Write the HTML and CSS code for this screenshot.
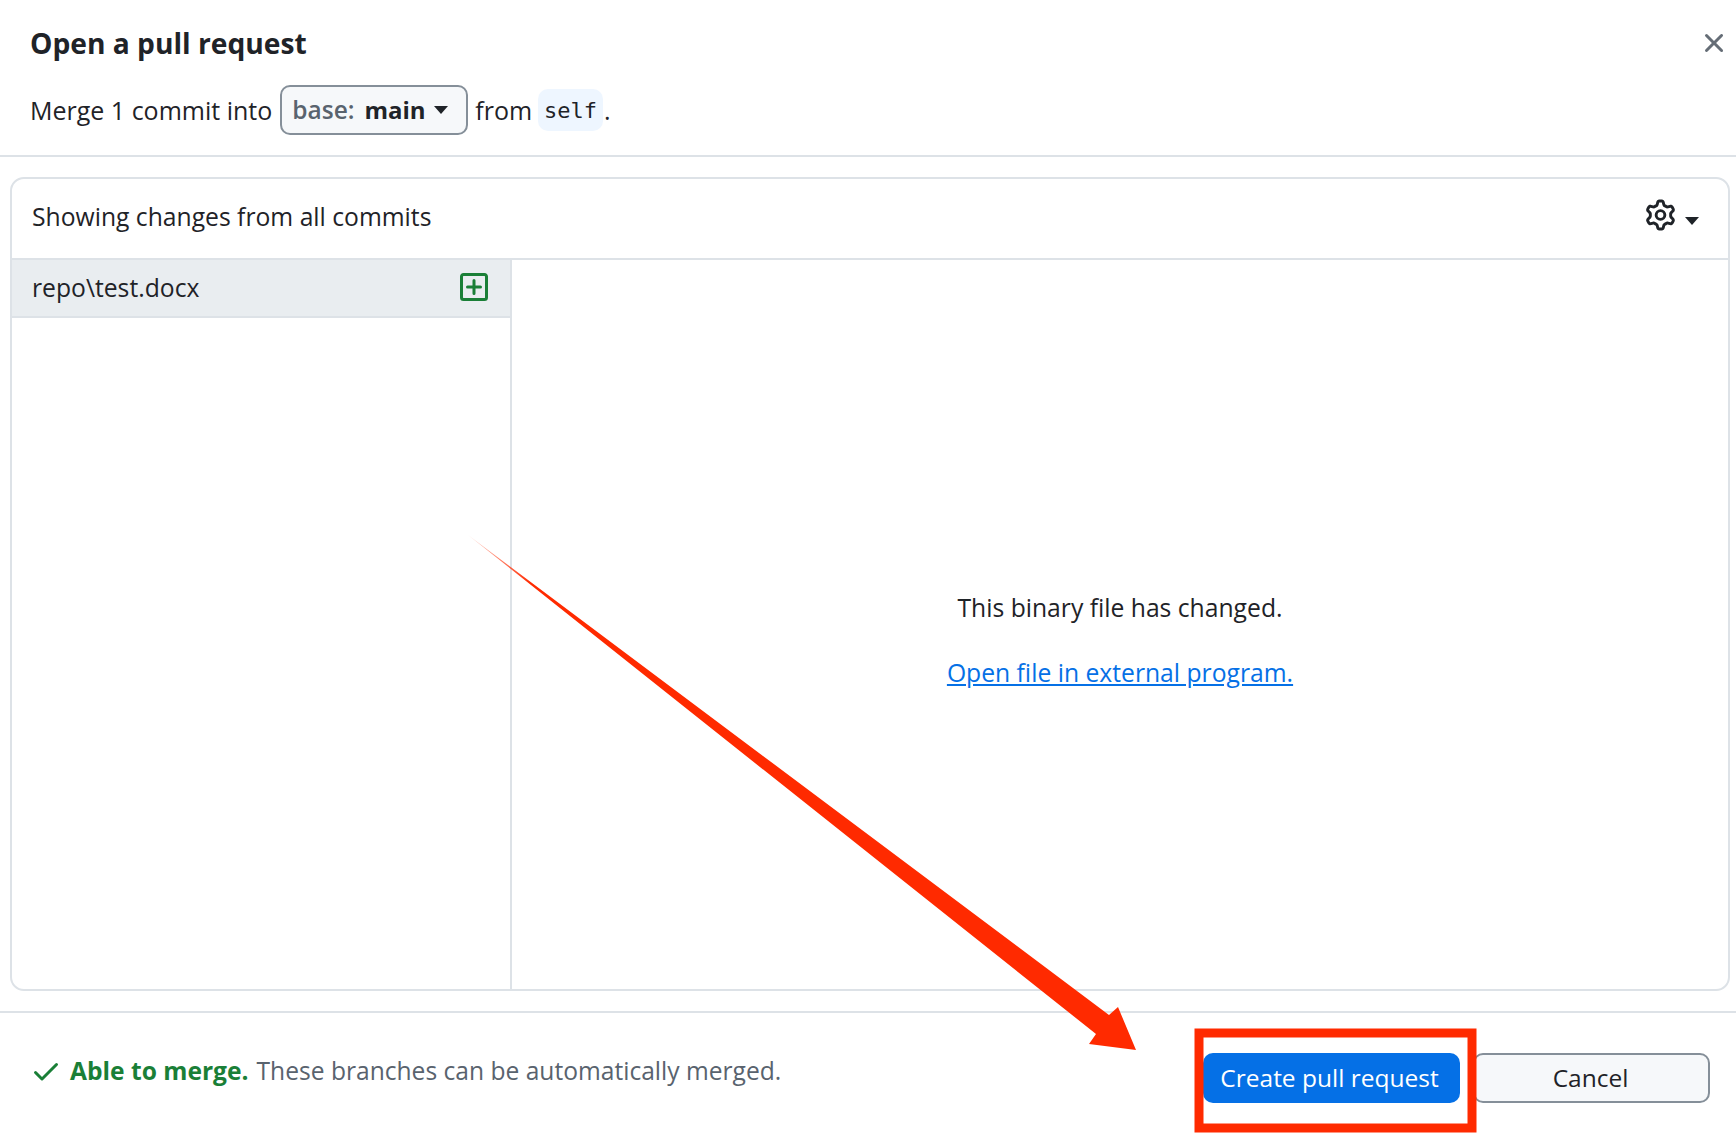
FILE: index.html
```html
<!DOCTYPE html>
<html lang="en">
<head>
<meta charset="utf-8">
<title>Open a pull request</title>
<link rel="stylesheet" href="styles.css">
</head>
<body>
<div class="dialog">
  <header class="header">
    <div class="title-row">
      <h1 class="title">Open a pull request</h1>
      <svg class="close" viewBox="0 0 16 16"><path d="M3.72 3.72a.75.75 0 0 1 1.06 0L8 6.94l3.22-3.22a.749.749 0 0 1 1.275.326.749.749 0 0 1-.215.734L9.06 8l3.22 3.22a.749.749 0 0 1-.326 1.275.749.749 0 0 1-.734-.215L8 9.06l-3.22 3.22a.751.751 0 0 1-1.042-.018.751.751 0 0 1-.018-1.042L6.94 8 3.72 4.78a.75.75 0 0 1 0-1.06Z"/></svg>
    </div>
    <div class="merge-row">
      <span>Merge 1 commit into</span>
      <button class="base-btn"><span class="base-label">base:</span><span class="base-name">main</span><span class="caret"></span></button>
      <span>from</span>
      <code class="branch">self</code><span class="dot">.</span>
    </div>
  </header>
  <section class="card">
    <div class="card-head">
      <span>Showing changes from all commits</span>
      <div class="settings">
        <svg class="gear" viewBox="0 0 16 16"><path d="M8 0a8.2 8.2 0 0 1 .701.031C9.444.095 9.99.645 10.16 1.29l.288 1.107c.018.066.079.158.212.224.231.114.454.243.668.386.123.082.233.09.299.071l1.103-.303c.644-.176 1.392.021 1.82.63.27.385.506.792.704 1.218.315.675.111 1.422-.364 1.891l-.814.806c-.049.048-.098.147-.088.294.016.257.016.515 0 .772-.01.147.038.246.088.294l.814.806c.475.469.679 1.216.364 1.891a7.977 7.977 0 0 1-.704 1.217c-.428.61-1.176.807-1.82.63l-1.102-.302c-.067-.019-.177-.011-.3.071a5.909 5.909 0 0 1-.668.386c-.133.066-.194.158-.211.224l-.29 1.106c-.168.646-.715 1.196-1.458 1.26a8.006 8.006 0 0 1-1.402 0c-.743-.064-1.289-.614-1.458-1.26l-.289-1.106c-.018-.066-.079-.158-.212-.224a5.738 5.738 0 0 1-.668-.386c-.123-.082-.233-.09-.299-.071l-1.103.303c-.644.176-1.392-.021-1.82-.63a8.12 8.12 0 0 1-.704-1.218c-.315-.675-.111-1.422.363-1.891l.815-.806c.05-.048.098-.147.088-.294a6.214 6.214 0 0 1 0-.772c.01-.147-.038-.246-.088-.294l-.815-.806C.635 6.045.431 5.298.746 4.623a7.92 7.92 0 0 1 .704-1.217c.428-.61 1.176-.807 1.82-.63l1.102.302c.067.019.177.011.3-.071.214-.143.437-.272.668-.386.133-.066.194-.158.211-.224l.29-1.106C6.009.645 6.556.095 7.299.03 7.53.01 7.764 0 8 0Zm-.571 1.525c-.036.003-.108.036-.137.146l-.289 1.105c-.147.561-.549.967-.998 1.189-.173.086-.34.183-.5.29-.417.278-.97.423-1.529.27l-1.103-.303c-.109-.03-.175.016-.195.045-.22.312-.412.644-.573.99-.014.031-.021.11.059.19l.815.806c.411.406.562.957.53 1.456a4.709 4.709 0 0 0 0 .582c.032.499-.119 1.05-.53 1.456l-.815.806c-.081.08-.073.159-.059.19.162.346.353.677.573.989.02.03.085.076.195.046l1.102-.303c.56-.153 1.113-.008 1.53.27.161.107.328.204.501.29.447.222.85.629.997 1.189l.289 1.105c.029.109.101.143.137.146a6.6 6.6 0 0 0 1.142 0c.036-.003.108-.036.137-.146l.289-1.105c.147-.561.549-.967.998-1.189.173-.086.34-.183.5-.29.417-.278.97-.423 1.529-.27l1.103.303c.109.029.175-.016.195-.045.22-.313.411-.644.573-.99.014-.031.021-.11-.059-.19l-.815-.806c-.411-.406-.562-.957-.53-1.456a4.709 4.709 0 0 0 0-.582c-.032-.499.119-1.05.53-1.456l.815-.806c.081-.08.073-.159.059-.19a6.464 6.464 0 0 0-.573-.989c-.02-.03-.085-.076-.195-.046l-1.102.303c-.56.153-1.113.008-1.53-.27a4.44 4.44 0 0 0-.501-.29c-.447-.222-.85-.629-.997-1.189l-.289-1.105c-.029-.11-.101-.143-.137-.146a6.6 6.6 0 0 0-1.142 0ZM11 8a3 3 0 1 1-6 0 3 3 0 0 1 6 0ZM9.5 8a1.5 1.5 0 1 0-3.001.001A1.5 1.5 0 0 0 9.5 8Z"/></svg>
        <span class="caret caret-dark"></span>
      </div>
    </div>
    <div class="card-body">
      <aside class="sidebar">
        <div class="file-row">
          <span>repo\test.docx</span>
          <svg class="added" viewBox="0 0 16 16"><path d="M2.75 1h10.5c.966 0 1.75.784 1.75 1.75v10.5A1.75 1.75 0 0 1 13.25 15H2.75A1.75 1.75 0 0 1 1 13.25V2.75C1 1.784 1.784 1 2.75 1Zm10.5 1.5H2.75a.25.25 0 0 0-.25.25v10.5c0 .138.112.25.25.25h10.5a.25.25 0 0 0 .25-.25V2.75a.25.25 0 0 0-.25-.25ZM8 4a.75.75 0 0 1 .75.75v2.5h2.5a.75.75 0 0 1 0 1.5h-2.5v2.5a.75.75 0 0 1-1.5 0v-2.5h-2.5a.75.75 0 0 1 0-1.5h2.5v-2.5A.75.75 0 0 1 8 4Z"/></svg>
        </div>
      </aside>
      <main class="diff">
        <p class="binary">This binary file has changed.</p>
        <a class="external" href="#">Open file in external program.</a>
      </main>
    </div>
  </section>
  <footer class="footer">
    <div class="status">
      <svg class="check" viewBox="0 0 16 16"><path d="M13.78 4.22a.75.75 0 0 1 0 1.06l-7.25 7.25a.75.75 0 0 1-1.06 0L2.22 9.28a.751.751 0 0 1 .018-1.042.751.751 0 0 1 1.042-.018L6 10.94l6.72-6.72a.75.75 0 0 1 1.06 0Z"/></svg>
      <strong class="able">Able to merge.</strong>
      <span class="muted">These branches can be automatically merged.</span>
    </div>
    <div class="actions">
      <button class="btn btn-primary">Create pull request</button>
      <button class="btn btn-cancel">Cancel</button>
    </div>
  </footer>
  <svg class="annotation" viewBox="0 0 1736 1139" aria-hidden="true">
    <defs>
      <linearGradient id="fade" gradientUnits="userSpaceOnUse" x1="468" y1="535" x2="530" y2="585">
        <stop offset="0" stop-color="#ff2a00" stop-opacity="0.2"/>
        <stop offset="1" stop-color="#ff2a00"/>
      </linearGradient>
    </defs>
    <polygon fill="url(#fade)" points="468,535 1109,1015 1118,1007 1136,1050 1089,1044 1096,1034"/>
    <rect class="frame" x="1199" y="1033" width="273" height="95"/>
  </svg>
</div>
</body>
</html>
```

FILE: styles.css
```css
* { box-sizing: border-box; }
html, body { margin: 0; padding: 0; background: #fff; }
body {
  font-family: "Open Sans", "Noto Sans", sans-serif;
  font-size: 24.7px;
  color: #1f2328;
}
.dialog {
  position: relative;
  width: 1736px;
  height: 1139px;
  display: flex;
  flex-direction: column;
  overflow: hidden;
}
.header {
  height: 157px;
  border-bottom: 2px solid #dde2e7;
  padding: 23px 6px 0 30px;
  flex: none;
}
.title-row {
  display: flex;
  justify-content: space-between;
  align-items: center;
  height: 40px;
}
.title {
  margin: 0;
  font-size: 28.2px;
  line-height: 40px;
  font-weight: 700;
}
.close { width: 32px; height: 32px; fill: #656d76; flex: none; }
.merge-row {
  display: flex;
  align-items: center;
  margin-top: 22px;
  height: 50px;
  font-size: 25px;
  line-height: 48px;
}
.base-btn {
  display: flex;
  align-items: center;
  height: 50px;
  width: 188px;
  margin: 0 7px 0 8px;
  padding: 0 0 0 10px;
  background: #f6f8fa;
  border: 2px solid #858f99;
  border-radius: 10px;
  font: inherit;
  color: inherit;
}
.base-label { color: #59636e; font-weight: 600; font-size: 24.5px; }
.base-name { font-weight: 700; font-size: 24px; margin-left: 10px; }
.caret {
  width: 0;
  height: 0;
  margin-left: 8px;
  border-left: 7px solid transparent;
  border-right: 7px solid transparent;
  border-top: 8px solid #1f2328;
}
.branch {
  margin-left: 6px;
  padding: 0 6px;
  height: 42px;
  line-height: 44px;
  background: #eef6ff;
  border-radius: 10px;
  font-family: "DejaVu Sans Mono", "Liberation Mono", monospace;
  font-size: 22px;
}
.dot { margin-left: 1px; }
.card {
  flex: none;
  height: 814px;
  margin: 20px 6px 0 10px;
  border: 2px solid #dde2e7;
  border-radius: 14px;
  display: flex;
  flex-direction: column;
  overflow: hidden;
}
.card-head {
  flex: none;
  height: 81px;
  border-bottom: 2px solid #dde2e7;
  padding: 0 29px 4px 20px;
  display: flex;
  align-items: center;
  justify-content: space-between;
}
.settings { display: flex; align-items: center; }
.gear { width: 31px; height: 32px; fill: #1f2328; margin-top: -4px; }
.caret-dark { margin-left: 9px; margin-top: 8px; }
.card-body { flex: 1; display: flex; min-height: 0; }
.sidebar { flex: none; width: 500px; border-right: 2px solid #dde2e7; }
.file-row {
  height: 58px;
  padding: 0 20px 2px 20px;
  background: #e9edf0;
  border-bottom: 2px solid #dde2e7;
  display: flex;
  align-items: center;
  justify-content: space-between;
}
.added { width: 32px; height: 32px; fill: #1a7f37; }
.diff {
  flex: 1;
  display: flex;
  flex-direction: column;
  align-items: center;
  justify-content: center;
  padding-top: 30px;
}
.binary { margin: 0 0 32px; }
.external { color: #0570e6; }
.footer {
  margin-top: 20px;
  border-top: 2px solid #dde2e7;
  flex: 1;
  padding: 0 26px 0 30px;
  display: flex;
  justify-content: space-between;
  align-items: flex-start;
}
.status {
  display: flex;
  align-items: center;
  margin-top: 41px;
  font-size: 24.6px;
}
.check { width: 32px; height: 32px; fill: #1a7f37; margin-right: 8px; flex: none; }
.able { color: #1a7f37; font-weight: 700; }
.muted { color: #59636e; margin-left: 8px; }
.actions { display: flex; gap: 13px; margin-top: 40px; }
.btn {
  height: 50px;
  font: inherit;
  font-size: 24.5px;
  border-radius: 10px;
  cursor: pointer;
  padding: 0 2px 2px 0;
}
.btn-primary {
  width: 257px;
  color: #fff;
  background: #0570e6;
  border: none;
  padding-right: 4px;
}
.btn-cancel {
  width: 237px;
  color: #1f2328;
  background: #f6f8fa;
  border: 2px solid #858f99;
}
.annotation {
  position: absolute;
  left: 0;
  top: 0;
  width: 1736px;
  height: 1139px;
  pointer-events: none;
}
.frame { fill: none; stroke: #ff2a00; stroke-width: 9; }
```
